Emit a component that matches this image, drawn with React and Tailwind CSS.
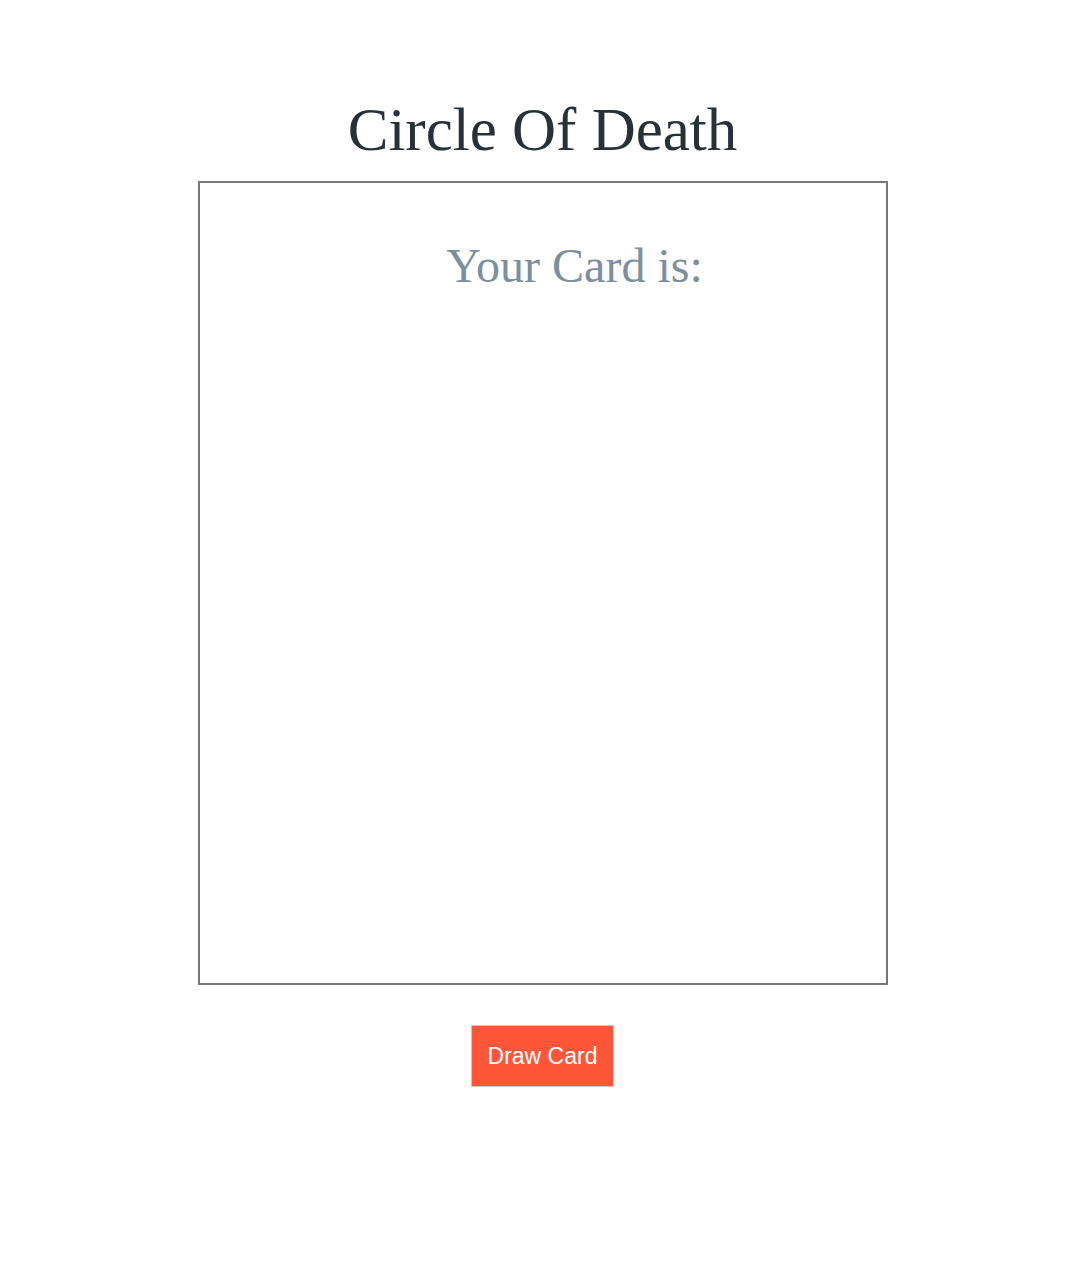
export default function App() {
  return (
    <div className="min-h-[1279px] bg-white flex flex-col items-center pt-[99px] pl-[10px]">
      <h1 className="text-[61px] leading-none text-[#263238] font-['Liberation_Serif',serif]">
        Circle Of Death
      </h1>
      <div className="mt-[21px] w-[690px] h-[804px] border-2 border-[#777777] flex flex-col items-center pt-[59px] pl-[64px]">
        <h2 className="text-[48px] leading-none text-[#7b8f9d] font-['Liberation_Serif',serif]">
          Your Card is:
        </h2>
      </div>
      <button className="mt-[40px] w-[143px] h-[62px] bg-[#ff5538] border border-[#c8c8c8] text-white text-[23px] font-['Liberation_Sans',Arial,sans-serif]">
        Draw Card
      </button>
    </div>
  );
}
